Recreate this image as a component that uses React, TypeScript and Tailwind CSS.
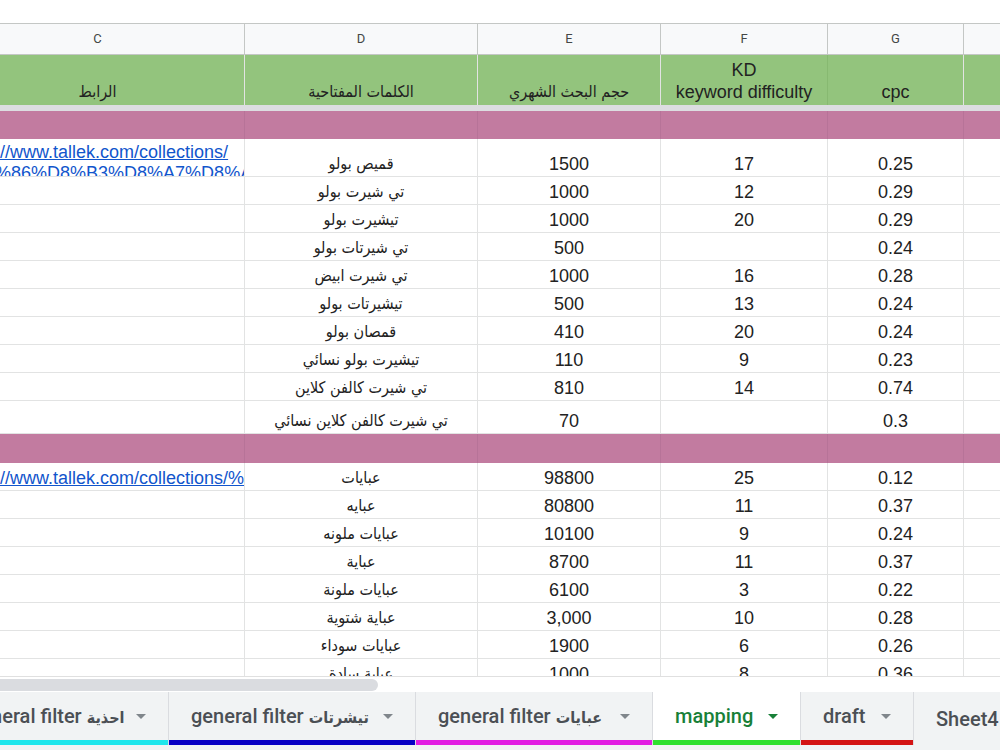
import React from "react";

type Row = {
  kw: string;
  vol: string;
  kd: string;
  cpc: string;
  h: string;
  link?: "wrap" | "clip";
};

const COL_W = ["w-[294px]", "w-[233px]", "w-[183px]", "w-[167px]", "w-[136px]", "w-[140px]"];
const LETTERS = ["C", "D", "E", "F", "G", ""];

const polo: Row[] = [
  { kw: "قميص بولو", vol: "1500", kd: "17", cpc: "0.25", h: "h-[38px]", link: "wrap" },
  { kw: "تي شيرت بولو", vol: "1000", kd: "12", cpc: "0.29", h: "h-[28px]" },
  { kw: "تيشيرت بولو", vol: "1000", kd: "20", cpc: "0.29", h: "h-[28px]" },
  { kw: "تي شيرتات بولو", vol: "500", kd: "", cpc: "0.24", h: "h-[28px]" },
  { kw: "تي شيرت ابيض", vol: "1000", kd: "16", cpc: "0.28", h: "h-[28px]" },
  { kw: "تيشيرتات بولو", vol: "500", kd: "13", cpc: "0.24", h: "h-[28px]" },
  { kw: "قمصان بولو", vol: "410", kd: "20", cpc: "0.24", h: "h-[28px]" },
  { kw: "تيشيرت بولو نسائي", vol: "110", kd: "9", cpc: "0.23", h: "h-[28px]" },
  { kw: "تي شيرت كالفن كلاين", vol: "810", kd: "14", cpc: "0.74", h: "h-[28px]" },
  { kw: "تي شيرت كالفن كلاين نسائي", vol: "70", kd: "", cpc: "0.3", h: "h-[33px]" },
];

const abaya: Row[] = [
  { kw: "عبايات", vol: "98800", kd: "25", cpc: "0.12", h: "h-[28px]", link: "clip" },
  { kw: "عبايه", vol: "80800", kd: "11", cpc: "0.37", h: "h-[28px]" },
  { kw: "عبايات ملونه", vol: "10100", kd: "9", cpc: "0.24", h: "h-[28px]" },
  { kw: "عباية", vol: "8700", kd: "11", cpc: "0.37", h: "h-[28px]" },
  { kw: "عبايات ملونة", vol: "6100", kd: "3", cpc: "0.22", h: "h-[28px]" },
  { kw: "عباية شتوية", vol: "3,000", kd: "10", cpc: "0.28", h: "h-[28px]" },
  { kw: "عبايات سوداء", vol: "1900", kd: "6", cpc: "0.26", h: "h-[28px]" },
  { kw: "عباية سادة", vol: "1000", kd: "8", cpc: "0.36", h: "h-[28px]" },
];

const cellBase =
  "shrink-0 h-full border-r border-[#e2e3e3] flex items-end justify-center pb-[2px] leading-[20px] overflow-hidden whitespace-nowrap";

// Arabic runs use a narrower face so they sit at the same width as the sheet's text
const ar = "font-['DejaVu_Sans_Condensed','DejaVu_Sans',sans-serif] text-[16px]";

function LinkCell({ mode }: { mode: "wrap" | "clip" }) {
  if (mode === "wrap") {
    return (
      <div className={`${COL_W[0]} shrink-0 h-full border-r border-[#e2e3e3] overflow-hidden pl-[5px] pt-[3px] leading-[21px] text-[#1155cc] underline`}>
        <div className="whitespace-nowrap">https://www.tallek.com/collections/</div>
        <div className="whitespace-nowrap">%D9%86%D8%B3%D8%A7%D8%A1</div>
      </div>
    );
  }
  return (
    <div className={`${COL_W[0]} shrink-0 h-full border-r border-[#e2e3e3] overflow-hidden flex items-end pl-[5px] pb-[2px] leading-[20px] text-[#1155cc] underline whitespace-nowrap`}>
      https://www.tallek.com/collections/%D8%B9%D8%A8%D8%A7%D9%8A%D8%A7%D8%AA
    </div>
  );
}

function DataRow({ r }: { r: Row }) {
  return (
    <div className={`flex ${r.h} border-b border-[#e2e3e3] bg-white`}>
      {r.link ? <LinkCell mode={r.link} /> : <div className={`${COL_W[0]} ${cellBase}`} />}
      <div className={`${COL_W[1]} ${cellBase}`}>
        <span className={ar} dir="rtl">{r.kw}</span>
      </div>
      <div className={`${COL_W[2]} ${cellBase}`}>{r.vol}</div>
      <div className={`${COL_W[3]} ${cellBase}`}>{r.kd}</div>
      <div className={`${COL_W[4]} ${cellBase}`}>{r.cpc}</div>
      <div className={`${COL_W[5]} ${cellBase}`} />
    </div>
  );
}

function BandRow({ h }: { h: string }) {
  return (
    <div className={`flex ${h} bg-[#c27ba0]`}>
      {COL_W.map((w) => (
        <div key={w} className={`${w} shrink-0 h-full border-r border-[#b77398]`} />
      ))}
    </div>
  );
}

function Caret({ color }: { color: string }) {
  return (
    <svg width="10" height="5" viewBox="0 0 10 5" className="shrink-0">
      <path d="M0 0 L10 0 L5 5 Z" fill={color} />
    </svg>
  );
}

type Tab = { label: string; arabic?: string; w: string; bar: string; active?: boolean; extra?: string };

const tabs: Tab[] = [
  { label: "general filter", arabic: "احذية", w: "w-[222px]", bar: "bg-[#1fe6ec]", extra: "ml-[-53px]" },
  { label: "general filter", arabic: "تيشرتات", w: "w-[247px]", bar: "bg-[#0800c4]" },
  { label: "general filter", arabic: "عبايات", w: "w-[237px]", bar: "bg-[#e21ee2]" },
  { label: "mapping", w: "w-[148px]", bar: "bg-[#2fe02f]", active: true },
  { label: "draft", w: "w-[113px]", bar: "bg-[#d41414]" },
];

export default function App() {
  return (
    <div className="w-[1000px] h-[750px] overflow-hidden bg-white flex flex-col font-['Liberation_Sans','DejaVu_Sans',sans-serif] text-[18px] text-[#222222]">
      {/* grid */}
      <div className="h-[676px] overflow-hidden shrink-0">
        <div className="h-[24px] border-b border-[#c4c7c5]" />
        <div className="ml-[-49px] w-[1200px]">
          {/* column letters */}
          <div className="flex h-[31px] bg-[#f8f9fa] border-b border-[#c4c7c5]">
            {COL_W.map((w, i) => (
              <div
                key={w}
                className={`${w} shrink-0 h-full border-r border-[#c4c7c5] flex items-center justify-center font-['Roboto',sans-serif] text-[13px] text-[#444746]`}
              >
                {LETTERS[i]}
              </div>
            ))}
          </div>
          {/* header labels */}
          <div className="flex h-[50px] bg-[#93c47d]">
            <div className={`${COL_W[0]} ${cellBase} border-[#87b971] leading-[22px]`}>
              <span className={ar}>الرابط</span>
            </div>
            <div className={`${COL_W[1]} ${cellBase} border-[#87b971] leading-[22px]`}>
              <span className={ar}>الكلمات المفتاحية</span>
            </div>
            <div className={`${COL_W[2]} ${cellBase} border-[#87b971] leading-[22px]`}>
              <span className={ar}>حجم البحث الشهري</span>
            </div>
            <div className={`${COL_W[3]} shrink-0 h-full border-r border-[#87b971] flex flex-col items-center justify-end pb-[2px] leading-[22px] whitespace-nowrap`}>
              <span>KD</span>
              <span>keyword difficulty</span>
            </div>
            <div className={`${COL_W[4]} ${cellBase} border-[#87b971] leading-[22px]`}>cpc</div>
            <div className={`${COL_W[5]} ${cellBase} border-[#87b971]`} />
          </div>
          <div className="h-[6px] bg-[#dcdde1]" />
          <BandRow h="h-[28px]" />
          {polo.map((r, i) => (
            <DataRow key={"p" + i} r={r} />
          ))}
          <BandRow h="h-[29px]" />
          {abaya.map((r, i) => (
            <DataRow key={"a" + i} r={r} />
          ))}
        </div>
      </div>

      {/* horizontal scrollbar */}
      <div className="h-[16px] shrink-0 border-t border-[#e0e0e0] bg-white flex items-center overflow-hidden">
        <div className="ml-[-10px] w-[388px] h-[12px] rounded-full bg-[#dadce0]" />
      </div>

      {/* sheet tabs */}
      <div className="h-[58px] shrink-0 bg-[#f1f3f4] flex items-start overflow-hidden font-['Roboto','DejaVu_Sans',sans-serif] font-medium text-[20px]">
        {tabs.map((t, i) => (
          <div
            key={i}
            className={`${t.w} ${t.extra ?? ""} shrink-0 h-[53px] flex flex-col border-r border-[#dadce0] ${t.active ? "bg-white" : ""}`}
          >
            <div className="flex-1 flex items-center justify-between pl-[22px] pr-[22px] whitespace-nowrap">
              <span className={t.active ? "text-[#188038]" : "text-[#4b4f54]"}>
                {t.label}
                {t.arabic ? (
                  <span className="font-['DejaVu_Sans_Condensed','DejaVu_Sans',sans-serif] font-bold text-[16px]">
                    {" " + t.arabic}
                  </span>
                ) : null}
              </span>
              <Caret color={t.active ? "#188038" : "#80868b"} />
            </div>
            <div className={`h-[5px] ${t.bar}`} />
          </div>
        ))}
        <div className="shrink-0 h-[53px] flex items-center pl-[22px] whitespace-nowrap text-[#4b4f54]">Sheet4</div>
      </div>
    </div>
  );
}
